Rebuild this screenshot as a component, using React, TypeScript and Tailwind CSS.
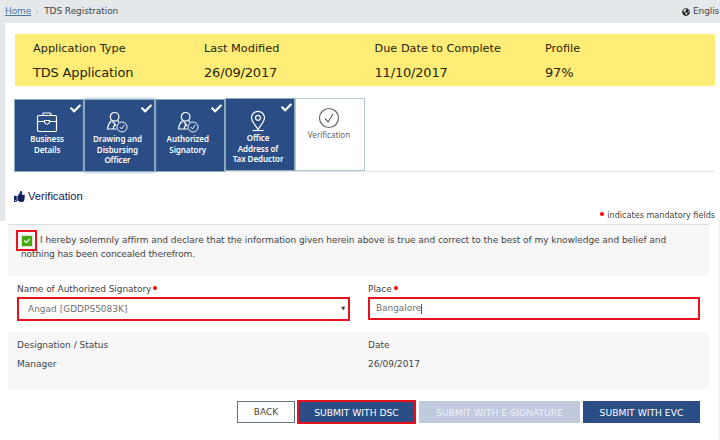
import type { ReactNode } from "react";
import { FaCheck, FaThumbsUp, FaGlobeAmericas } from "react-icons/fa";

const summary = [
  { label: "Application Type", value: "TDS Application", width: "w-[171px]" },
  { label: "Last Modified", value: "26/09/2017", width: "w-[170.500px]" },
  { label: "Due Date to Complete", value: "11/10/2017", width: "w-[170.500px]" },
  { label: "Profile", value: "97%", width: "w-[100px]" },
];

function BriefcaseIcon() {
  return (
    <svg width="22" height="22" viewBox="0 0 22 22" fill="none" stroke="currentColor" strokeWidth="1.2">
      <rect x="1.5" y="4.500" width="19" height="16" rx="1.5" />
      <path d="M7 4.500V3Q7 2 8 2h6q1 0 1 1v1.500M1.500 10.500h7M13.500 10.500h7" />
      <path d="M8.500 9.500h5v2q-2.500 3.500-5 0z" />
    </svg>
  );
}

function OfficerIcon() {
  return (
    <svg width="22" height="22" viewBox="0 0 22 22" fill="none" stroke="currentColor" strokeWidth="1.2">
      <circle cx="8.600" cy="5.800" r="4.300" />
      <path d="M5.500 9.500Q2 13 1.500 18h9M11.600 9.500l1.400 1.600M6.500 10.400l2.300 2.600-1.600 4.500M8.800 13l1.200 2" />
      <circle cx="16" cy="16" r="5" strokeWidth="0.9" />
      <path d="M13.800 16l1.700 2 2.800-4.200" strokeWidth="0.9" />
    </svg>
  );
}

function PinIcon() {
  return (
    <svg width="22" height="22" viewBox="0 0 22 22" fill="none" stroke="currentColor" strokeWidth="1.2">
      <path d="M11 19.500C9 15.500 4.500 12 4.500 7.800a6.500 6.500 0 0 1 13 0c0 4.200-4.500 7.700-6.500 11.700z" />
      <circle cx="11" cy="7.800" r="2.500" />
      <path d="M5.500 20.500h11" />
    </svg>
  );
}

function CircleCheckIcon() {
  return (
    <svg width="22" height="22" viewBox="0 0 22 22" fill="none" stroke="currentColor" strokeWidth="1.2">
      <circle cx="11" cy="11" r="9.500" />
      <path d="M7 11.500l3 3.500 5-8" />
    </svg>
  );
}

const steps = [
  { icon: <BriefcaseIcon />, lines: ["Business", "Details"] },
  { icon: <OfficerIcon />, lines: ["Drawing and", "Disbursing", "Officer"], raised: true },
  { icon: <OfficerIcon />, lines: ["Authorized", "Signatory"] },
  { icon: <PinIcon />, lines: ["Office", "Address of", "Tax Deductor"], lifted: true },
];

function Dot({ className = "" }: { className?: string }) {
  return <span className={"inline-block size-[4px] rounded-full bg-[#f00] " + className} />;
}

function Label({ children, required }: { children: ReactNode; required?: boolean }) {
  return (
    <div className="flex h-[14px] items-center leading-[14px]">
      <span className={required ? "tracking-[-0.050px]" : ""}>{children}</span>
      {required && <Dot className="mb-[2px] ml-[2px]" />}
    </div>
  );
}

export default function App() {
  return (
    <div className="flex h-[440px] w-[720px] flex-col overflow-hidden bg-white font-['DejaVu_Sans',Verdana,sans-serif] text-[9px] whitespace-nowrap text-[#444]">
      <header className="flex h-[23px] shrink-0 items-center bg-[#e4e8eb] pl-[5px]">
        <a className="tracking-[-0.100px] text-[#4b7899] underline">Home</a>
        <svg className="ml-[4px]" width="4" height="6" viewBox="0 0 4 6" fill="none" stroke="#c6cacd">
          <path d="M.5.500L3 3 .5 5.500" />
        </svg>
        <span className="ml-[5px] tracking-[-0.080px]">TDS Registration</span>
        <span className="ml-auto flex w-[38px] items-center gap-[3px]">
          <FaGlobeAmericas className="size-[8px] shrink-0 text-[#222]" />
          <span className="tracking-[-0.100px]">Englis</span>
        </span>
      </header>

      <section className="h-[198px] shrink-0 border-l-[5px] border-[#e4e8eb] pt-[11px] pr-[5px] pl-[9px]">
        <div className="ml-[0.5px] flex h-[52px] rounded-[1px] bg-[#ffed78] pl-[18.500px] text-[#25250f]">
          {summary.map((s) => (
            <div key={s.label} className={s.width}>
              <div className="mt-[7px] h-[16px] text-[11.300px] leading-[16px]">{s.label}</div>
              <div className="mt-[7px] h-[18px] text-[13px] leading-[18px] tracking-[-0.180px]">{s.value}</div>
            </div>
          ))}
        </div>

        <nav className="mt-[13px] flex h-[73px] border-b border-[#dfe2e4] font-['Noto_Sans',sans-serif] text-[8px] leading-[10.700px]">
          {steps.map((s) => (
            <div
              key={s.lines[0]}
              className={
                "relative flex h-[73px] w-[70.300px] flex-col items-center border border-[#8aabbd] bg-[#2a4d86] pr-[4px] font-semibold text-white " +
                (s.lifted ? "-mt-px pt-[11px] " : "pt-[11px] ") +
                (s.raised ? "z-10 shadow-[0_0_3px_#7fa0b8]" : "")
              }
            >
              <FaCheck className="absolute top-[3px] right-[2px] size-[11px]" />
              {s.icon}
              <div className="mt-[1px] text-center tracking-[-0.080px]">
                {s.lines.map((l) => (
                  <div key={l}>{l}</div>
                ))}
              </div>
            </div>
          ))}
          <div className="-mt-px flex h-[73px] w-[70px] flex-col items-center border border-[#b1c8d6] bg-white pt-[8px] pr-[2.500px] text-[#666]">
            <CircleCheckIcon />
            <div className="mt-px">Verification</div>
          </div>
        </nav>

        <h2 className="mt-[16px] flex h-[17px] items-center gap-[3px] font-['Liberation_Sans',sans-serif] text-[11.200px] text-[#11205a]">
          <FaThumbsUp className="mb-px size-[11px]" />
          Verification
        </h2>
        <div className="flex h-[14px] items-center justify-end gap-[3px] pt-[7px] text-[8.100px]">
          <Dot className="mb-[4px]" />
          indicates mandatory fields
        </div>
      </section>

      <main className="flex h-[219px] shrink-0 justify-between">
        <form className="ml-[8px] flex w-[701px] flex-col">
          <div className="mt-[3px] flex h-[52px] flex-col border-t border-[#ddd] bg-[#f7f7f7] pl-[8px] leading-[13px]">
            <div className="mt-[5px] flex h-[21px] items-center gap-[3px]">
              <span className="flex size-[21px] items-center justify-center border-2 border-[#e8121e]">
                <span className="flex size-[12px] items-center justify-center border border-[#dedede] bg-[#43a90f] text-white">
                  <FaCheck className="size-[6px]" />
                </span>
              </span>
              <span className="tracking-[-0.054px]">
                I hereby solemnly affirm and declare that the information given herein above is true and correct to the best of my knowledge and belief and
              </span>
            </div>
            <div className="relative -mt-[3px] ml-[5px] tracking-[-0.100px]">nothing has been concealed therefrom.</div>
          </div>

          <div className="flex h-[56px] pt-[6px] pl-[9px]">
            <div className="w-[351px]">
              <Label required>Name of Authorized Signatory</Label>
              <div className="mt-[1px] flex h-[24px] w-[333px] items-center justify-between border-2 border-[#e8121e] pt-px pr-[3px] pl-[9px] text-[#707070]">
                <span>Angad [GDDPS5083K]</span>
                <span className="mb-[2px] text-[5px] text-[#333]">▼</span>
              </div>
            </div>
            <div>
              <Label required>Place</Label>
              <div className="mt-[1px] flex h-[23px] w-[332px] items-center border-2 border-[#e8121e] pt-px pl-[6px] text-[#707070]">
                <span className="tracking-[-0.060px]">Bangalore</span>
                <span className="h-[10px] w-px bg-[#555]" />
              </div>
            </div>
          </div>

          <div className="flex h-[57px] bg-[#f7f7f7] pt-[6px] pl-[9px]">
            <div className="flex w-[351px] flex-col gap-[5px]">
              <Label>Designation / Status</Label>
              <Label>Manager</Label>
            </div>
            <div className="flex flex-col gap-[5px]">
              <Label>Date</Label>
              <Label>26/09/2017</Label>
            </div>
          </div>

          <div className="mt-[12px] flex justify-end pr-[9px] *:flex *:h-[22px] *:items-center *:justify-center *:pt-px">
            <button type="button" className="mr-[2px] w-[58px] border border-[#607388]">BACK</button>
            <button type="button" className="-mt-px mr-[3px] h-[24px]! w-[119px] border-2 border-[#e8121e] bg-[#2a4d86] text-[9.200px] text-white">
              SUBMIT WITH DSC
            </button>
            <button type="button" className="mr-[3px] w-[161px] bg-[#c1c9dc] text-[9.200px] text-[#eef2fa]">SUBMIT WITH E-SIGNATURE</button>
            <button type="button" className="w-[117px] bg-[#2a4d86] text-[9.200px] text-white">SUBMIT WITH EVC</button>
          </div>
        </form>
        <div className="w-[2px] bg-[#f4f4f4]" />
      </main>
    </div>
  );
}
